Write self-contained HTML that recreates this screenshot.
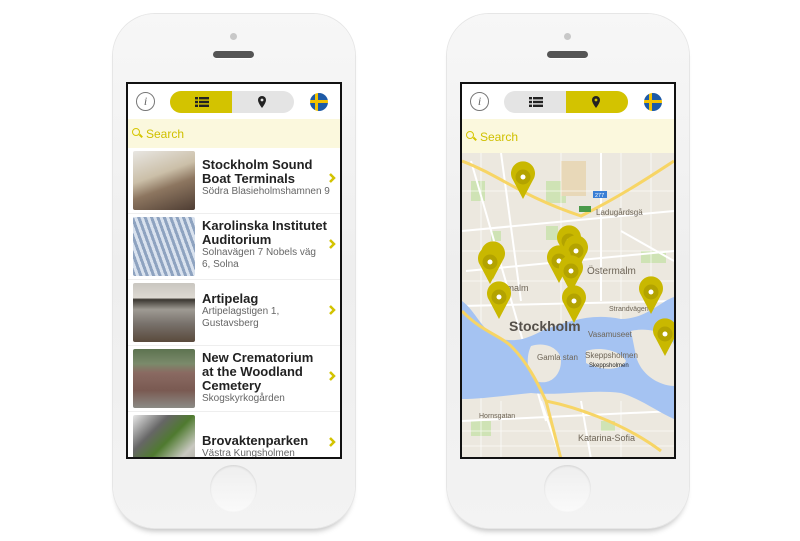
<!DOCTYPE html>
<html><head><meta charset="utf-8"><style>
*{margin:0;padding:0;box-sizing:border-box}
body{width:800px;height:541px;background:#fff;position:relative;overflow:hidden;font-family:"Liberation Sans",sans-serif}
.phone{position:absolute;top:14px;width:242px;height:514px;border-radius:42px;background:linear-gradient(#f7f7f7,#eeeeee 50%,#f3f3f3);box-shadow:0 0 0 1px #e6e6e6, 0 6px 6px -3px rgba(0,0,0,.25)}
.cam{position:absolute;left:117px;top:19px;width:7px;height:7px;border-radius:50%;background:#c8c8c8}
.spk{position:absolute;left:100px;top:37px;width:41px;height:7px;border-radius:4px;background:#555;box-shadow:0 1px 0 #fff}
.home{position:absolute;left:97px;top:451px;width:47px;height:47px;border-radius:50%;background:linear-gradient(#eee,#fafafa);box-shadow:inset 0 1px 2px rgba(0,0,0,.12)}
.screen{position:absolute;left:13px;top:68px;width:216px;height:377px;border:2px solid #111;background:#fff;overflow:hidden}
.hdr{position:absolute;left:0;top:0;width:212px;height:35px;background:#fff}
.info{position:absolute;left:8px;top:8px;width:19px;height:19px;border-radius:50%;border:1.5px solid #777;font:italic 12px "Liberation Serif",serif;color:#666;text-align:center;line-height:16px}
.tog{position:absolute;left:42px;top:7px;width:124px;height:22px;border-radius:11px;background:#e4e4e4;overflow:hidden}
.tog .y{position:absolute;top:0;width:62px;height:22px;background:#d3c300}
.flag{position:absolute;left:182px;top:9px;width:18px;height:18px;border-radius:50%;background:linear-gradient(90deg,transparent 5px,#f2c200 5px,#f2c200 8px,transparent 8px),linear-gradient(transparent 7px,#f2c200 7px,#f2c200 10px,transparent 10px),#1d5aa6}
.srch{position:absolute;left:0;top:35px;width:212px;height:29px;background:#fbf8dd;color:#cfc000;font-size:12px;padding:8px 0 0 18px}
.srch i{position:absolute;left:4px;top:9px;width:8px;height:8px;border:1.5px solid #d6c600;border-radius:50%}
.srch i:after{content:"";position:absolute;left:6px;top:6px;width:4px;height:1.5px;background:#d6c600;transform:rotate(45deg)}
.row{position:absolute;left:0;width:212px;height:66px;border-bottom:1px solid #eee}
.th{position:absolute;left:5px;top:3px;width:62px;height:59px;border-radius:2px}
.tt{position:absolute;left:74px;font-weight:bold;font-size:13px;color:#222;line-height:14px}
.st{font-weight:normal;font-size:10px;color:#666;line-height:12px;display:block}
.ch{position:absolute;right:3px;width:10px;height:14px}
</style></head><body>

<div class="phone" style="left:113px">
<div class="cam"></div><div class="spk"></div><div class="home"></div>
<div class="screen">
 <div class="hdr"><div class="info">i</div>
  <div class="tog"><div class="y" style="left:0"></div>
   <svg style="position:absolute;left:25px;top:6px" width="14" height="10"><g fill="#222"><rect x="0" y="0" width="3" height="2.4"/><rect x="4" y="0" width="10" height="2.4"/><rect x="0" y="3.8" width="3" height="2.4"/><rect x="4" y="3.8" width="10" height="2.4"/><rect x="0" y="7.6" width="3" height="2.4"/><rect x="4" y="7.6" width="10" height="2.4"/></g></svg>
   <svg style="position:absolute;left:88px;top:5px" width="8" height="12"><path d="M4 0a4 4 0 0 1 4 4c0 3-4 8-4 8S0 7 0 4a4 4 0 0 1 4-4z" fill="#222"/><circle cx="4" cy="4" r="1.4" fill="#e4e4e4"/></svg>
  </div><div class="flag"></div></div>
 <div class="srch"><i></i>Search</div>
 <div class="row" style="top:64px"><div class="th" style="background:linear-gradient(160deg,#e8e6e2 0%,#cbbfa8 40%,#8d7660 60%,#4e3d33 100%)"></div><div class="tt" style="top:10px">Stockholm Sound<br>Boat Terminals<span class="st">Södra Blasieholmshamnen 9</span></div><svg class="ch" style="top:23px" viewBox="0 0 10 14"><path d="M3 3l4 4-4 4" stroke="#d3c300" stroke-width="2.5" fill="none"/></svg></div>
 <div class="row" style="top:130px"><div class="th" style="background:repeating-linear-gradient(70deg,#8ea3c0 0 3px,#d9e2ee 3px 6px),#aab"></div><div class="tt" style="top:5px">Karolinska Institutet<br>Auditorium<span class="st">Solnavägen 7 Nobels väg<br>6, Solna</span></div><svg class="ch" style="top:23px" viewBox="0 0 10 14"><path d="M3 3l4 4-4 4" stroke="#d3c300" stroke-width="2.5" fill="none"/></svg></div>
 <div class="row" style="top:196px"><div class="th" style="background:linear-gradient(#c9c6c0 0%,#ddd9d2 25%,#3a3630 28%,#9e9a93 45%,#77706a 70%,#5a4a3c 100%)"></div><div class="tt" style="top:12px">Artipelag<span class="st">Artipelagstigen 1,<br>Gustavsberg</span></div><svg class="ch" style="top:23px" viewBox="0 0 10 14"><path d="M3 3l4 4-4 4" stroke="#d3c300" stroke-width="2.5" fill="none"/></svg></div>
 <div class="row" style="top:262px"><div class="th" style="background:linear-gradient(#5d7350 0%,#7b8a6b 25%,#8a6a62 40%,#7a5a52 70%,#8b8b86 100%)"></div><div class="tt" style="top:5px">New Crematorium<br>at the Woodland<br>Cemetery<span class="st">Skogskyrkogården</span></div><svg class="ch" style="top:23px" viewBox="0 0 10 14"><path d="M3 3l4 4-4 4" stroke="#d3c300" stroke-width="2.5" fill="none"/></svg></div>
 <div class="row" style="top:328px"><div class="th" style="background:linear-gradient(135deg,#e8e8e8 0%,#666 30%,#4f7a2f 50%,#c8c8c0 75%,#a7a49c 100%)"></div><div class="tt" style="top:22px">Brovaktenparken<span class="st">Västra Kungsholmen</span></div><svg class="ch" style="top:23px" viewBox="0 0 10 14"><path d="M3 3l4 4-4 4" stroke="#d3c300" stroke-width="2.5" fill="none"/></svg></div>
</div></div>

<div class="phone" style="left:447px">
<div class="cam"></div><div class="spk"></div><div class="home"></div>
<div class="screen">
 <div class="hdr"><div class="info">i</div>
  <div class="tog"><div class="y" style="left:62px"></div>
   <svg style="position:absolute;left:25px;top:6px" width="14" height="10"><g fill="#222"><rect x="0" y="0" width="3" height="2.4"/><rect x="4" y="0" width="10" height="2.4"/><rect x="0" y="3.8" width="3" height="2.4"/><rect x="4" y="3.8" width="10" height="2.4"/><rect x="0" y="7.6" width="3" height="2.4"/><rect x="4" y="7.6" width="10" height="2.4"/></g></svg>
   <svg style="position:absolute;left:88px;top:5px" width="8" height="12"><path d="M4 0a4 4 0 0 1 4 4c0 3-4 8-4 8S0 7 0 4a4 4 0 0 1 4-4z" fill="#222"/><circle cx="4" cy="4" r="1.4" fill="#d3c300"/></svg>
  </div><div class="flag"></div></div>
 <div class="srch" style="height:34px;padding-top:11px"><i style="top:12px"></i>Search</div>
 <svg style="position:absolute;left:0;top:69px" width="212" height="306" viewBox="461 152 212 306">
  <rect x="461" y="152" width="212" height="306" fill="#ece8df"/>
  <g fill="#cfe3b5"><rect x="470" y="180" width="14" height="20"/><rect x="545" y="225" width="12" height="14"/><rect x="640" y="250" width="25" height="12"/><rect x="470" y="420" width="20" height="15"/><rect x="545" y="180" width="20" height="22"/><rect x="490" y="230" width="10" height="10"/><rect x="600" y="420" width="14" height="10"/></g>
  <rect x="560" y="160" width="25" height="35" fill="#e8d8b8"/>
  <g stroke="#fff" stroke-width="2" fill="none">
   <path d="M470 160L545 420M465 270L673 250M461 305L673 300M500 152L520 300M600 152L600 300M461 230L673 210M461 420L673 410M620 230L673 260M540 400L560 458M580 400L590 458"/>
  </g>
  <g stroke="#fff" stroke-width="0.8" fill="none" opacity=".8">
   <path d="M461 190H673M461 250H673M461 280H673M461 430H673M461 445H673M480 152V458M560 152V330M620 152V330M650 152V330M500 400V458M620 400V458"/>
  </g>
  <path d="M461 300C475 310 480 330 500 338C520 342 530 335 545 328C570 320 590 312 620 318C645 318 660 300 673 296V418C655 410 640 398 620 392C590 388 560 395 530 392C500 395 480 398 461 398Z" fill="#a5c3f2"/>
  <path d="M530 345C545 340 560 348 560 360C560 375 548 385 535 380C525 372 525 355 530 345Z" fill="#ece8df"/>
  <path d="M585 350C600 345 620 350 625 360C620 370 600 370 585 362Z" fill="#ece8df"/>
  <path d="M630 330C650 325 673 335 673 345V385C660 385 640 375 635 355Z" fill="#ece8df"/>
  <g stroke="#f7d565" stroke-width="3" fill="none">
   <path d="M461 160C500 175 520 195 580 215C620 195 650 175 673 160"/>
   <path d="M461 310C480 330 500 335 510 345C530 365 540 390 545 400C570 405 620 420 660 450"/>
   <path d="M545 400L560 458"/>
  </g>
  <rect x="592" y="190" width="14" height="7" fill="#3a7fd5"/><text x="594" y="196" font-size="5.5" fill="#fff">277</text>
  <rect x="578" y="205" width="12" height="6" fill="#4a9a4a"/>
  <g font-family="Liberation Sans,sans-serif" fill="#6d6456">
   <text x="508" y="330" font-size="14" font-weight="bold" fill="#55504a">Stockholm</text>
   <text x="586" y="273" font-size="10">Östermalm</text>
   <text x="491" y="290" font-size="9">Normalm</text>
   <text x="536" y="359" font-size="8">Gamla stan</text>
   <text x="584" y="357" font-size="8">Skeppsholmen</text>
   <text x="588" y="366" font-size="6" fill="#222">Skeppsholmen</text>
   <text x="587" y="336" font-size="8">Vasamuseet</text>
   <text x="577" y="440" font-size="9">Katarina-Sofia</text>
   <text x="595" y="214" font-size="8">Ladugårdsgä</text>
   <text x="478" y="417" font-size="7">Hornsgatan</text>
   <text x="608" y="310" font-size="7">Strandvägen</text>
  </g>
  <g>
   <g transform="translate(522,198)"><path d="M0 0L-10-19A12 12 0 1 1 10-19Z" fill="#c9b800"/><circle cy="-22" r="7.5" fill="#b3a300"/><circle cy="-22" r="2.5" fill="#fff"/></g>
   <g transform="translate(492,278)"><path d="M0 0L-10-19A12 12 0 1 1 10-19Z" fill="#c9b800"/><circle cy="-22" r="7.5" fill="#b3a300"/><circle cy="-22" r="2.5" fill="#fff"/></g>
   <g transform="translate(489,283)"><path d="M0 0L-10-19A12 12 0 1 1 10-19Z" fill="#c9b800"/><circle cy="-22" r="7.5" fill="#b3a300"/><circle cy="-22" r="2.5" fill="#fff"/></g>
   <g transform="translate(498,318)"><path d="M0 0L-10-19A12 12 0 1 1 10-19Z" fill="#c9b800"/><circle cy="-22" r="7.5" fill="#b3a300"/><circle cy="-22" r="2.5" fill="#fff"/></g>
   <g transform="translate(568,262)"><path d="M0 0L-10-19A12 12 0 1 1 10-19Z" fill="#c9b800"/><circle cy="-22" r="7.5" fill="#b3a300"/><circle cy="-22" r="2.5" fill="#fff"/></g>
   <g transform="translate(575,272)"><path d="M0 0L-10-19A12 12 0 1 1 10-19Z" fill="#c9b800"/><circle cy="-22" r="7.5" fill="#b3a300"/><circle cy="-22" r="2.5" fill="#fff"/></g>
   <g transform="translate(558,282)"><path d="M0 0L-10-19A12 12 0 1 1 10-19Z" fill="#c9b800"/><circle cy="-22" r="7.5" fill="#b3a300"/><circle cy="-22" r="2.5" fill="#fff"/></g>
   <g transform="translate(570,292)"><path d="M0 0L-10-19A12 12 0 1 1 10-19Z" fill="#c9b800"/><circle cy="-22" r="7.5" fill="#b3a300"/><circle cy="-22" r="2.5" fill="#fff"/></g>
   <g transform="translate(573,322)"><path d="M0 0L-10-19A12 12 0 1 1 10-19Z" fill="#c9b800"/><circle cy="-22" r="7.5" fill="#b3a300"/><circle cy="-22" r="2.5" fill="#fff"/></g>
   <g transform="translate(650,313)"><path d="M0 0L-10-19A12 12 0 1 1 10-19Z" fill="#c9b800"/><circle cy="-22" r="7.5" fill="#b3a300"/><circle cy="-22" r="2.5" fill="#fff"/></g>
   <g transform="translate(664,355)"><path d="M0 0L-10-19A12 12 0 1 1 10-19Z" fill="#c9b800"/><circle cy="-22" r="7.5" fill="#b3a300"/><circle cy="-22" r="2.5" fill="#fff"/></g>
  </g>
 </svg>
</div></div>
</body></html>
